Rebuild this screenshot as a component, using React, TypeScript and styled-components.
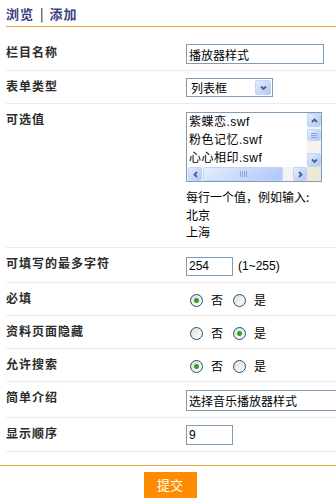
import styled, { createGlobalStyle } from 'styled-components';

const GlobalStyle = createGlobalStyle`
  html, body {
    margin: 0;
    padding: 0;
    background: #fff;
    overflow: hidden;
  }
  body {
    width: 336px;
    font-family: "Liberation Sans", "Noto Sans CJK SC", sans-serif;
    font-size: 12px;
    color: #000;
  }
`;

const listItems = ['紫蝶恋.swf', '粉色记忆.swf', '心心相印.swf'];

const Arrow = ({ dir }: { dir: 'up' | 'down' | 'left' | 'right' }) => {
  const points = {
    up: '2,6 4.5,3.5 7,6',
    down: '2,3.5 4.5,6 7,3.5',
    left: '6,2 3.5,4.5 6,7',
    right: '3,2 5.5,4.5 3,7',
  }[dir];
  return (
    <svg width="9" height="9" viewBox="0 0 9 9">
      <polyline points={points} fill="none" stroke="#4d6185" strokeWidth="1.8" />
    </svg>
  );
};

const Radio = ({ checked }: { checked?: boolean }) => (
  <RadioInput type="radio" defaultChecked={checked} readOnly />
);

const RadioGroup = ({ yes }: { yes?: boolean }) => (
  <Choices>
    <Choice>
      <Radio checked={!yes} />
      <span>否</span>
    </Choice>
    <Choice>
      <Radio checked={yes} />
      <span>是</span>
    </Choice>
  </Choices>
);

export default function App() {
  return (
    <>
      <GlobalStyle />
      <Page>
        <Header>
          <HeadLink>浏览</HeadLink>
          <Bar>|</Bar>
          <HeadLink>添加</HeadLink>
        </Header>

        <Form>
          <Row>
            <Label>栏目名称</Label>
            <Value>
              <TextInput $width={138} defaultValue="播放器样式" />
            </Value>
          </Row>

          <Row>
            <Label>表单类型</Label>
            <Value>
              <SelectBox>
                <span>列表框</span>
                <DropButton>
                  <Arrow dir="down" />
                </DropButton>
              </SelectBox>
            </Value>
          </Row>

          <Row>
            <Label>可选值</Label>
            <Value $top={1}>
              <ListBox>
                <ListItems>
                  {listItems.map(item => (
                    <ListItem key={item}>{item}</ListItem>
                  ))}
                </ListItems>
                <VScroll>
                  <ScrollButton>
                    <Arrow dir="up" />
                  </ScrollButton>
                  <VThumb>
                    <Grip $vertical />
                  </VThumb>
                  <ScrollButton>
                    <Arrow dir="down" />
                  </ScrollButton>
                </VScroll>
                <HScroll>
                  <ScrollButton>
                    <Arrow dir="left" />
                  </ScrollButton>
                  <HThumb>
                    <Grip />
                  </HThumb>
                  <ScrollButton>
                    <Arrow dir="right" />
                  </ScrollButton>
                </HScroll>
                <Corner />
              </ListBox>
              <Hint>
                <div>每行一个值，例如输入:</div>
                <div>北京</div>
                <div>上海</div>
              </Hint>
            </Value>
          </Row>

          <Row>
            <Label>可填写的最多字符</Label>
            <Value $top={2}>
              <TextInput $width={47} $height={19} defaultValue="254" />
              <Note>(1~255)</Note>
            </Value>
          </Row>

          <Row>
            <Label>必填</Label>
            <Value>
              <RadioGroup />
            </Value>
          </Row>

          <Row>
            <Label>资料页面隐藏</Label>
            <Value>
              <RadioGroup yes />
            </Value>
          </Row>

          <Row>
            <Label>允许搜索</Label>
            <Value>
              <RadioGroup />
            </Value>
          </Row>

          <Row>
            <Label>简单介绍</Label>
            <Value $top={1}>
              <TextInput $width={200} $height={21} defaultValue="选择音乐播放器样式" />
            </Value>
          </Row>

          <Row>
            <Label>显示顺序</Label>
            <Value>
              <TextInput $width={47} defaultValue="9" />
            </Value>
          </Row>
        </Form>

        <Footer>
          <SubmitButton>提交</SubmitButton>
        </Footer>
      </Page>
    </>
  );
}

const Page = styled.div`
  width: 336px;
  height: 502px;
  display: flex;
  flex-direction: column;
`;

const Header = styled.div`
  margin-left: 6px;
  padding: 6px 0 5px;
  border-bottom: 1px solid #e6a83e;
  display: flex;
  align-items: center;
  font-size: 13px;
  line-height: 15px;
  font-weight: bold;
  font-family: "Noto Sans CJK SC", sans-serif;
`;

const HeadLink = styled.span`
  color: #3b4183;
  letter-spacing: 1px;
`;

const Bar = styled.span`
  color: #000;
  font-weight: normal;
  margin: 0 6px 0 6px;
`;

const Form = styled.div`
  margin: 10px 0 0 6px;
  display: flex;
  flex-direction: column;
`;

const Row = styled.div`
  display: grid;
  grid-template-columns: 180px 1fr;
  align-items: start;
  padding: 7px 0 6px;
  border-bottom: 1px solid #ececec;
`;

const Label = styled.div`
  font-family: "Noto Sans CJK SC", sans-serif;
  font-weight: bold;
  font-size: 12px;
  line-height: 15px;
  letter-spacing: 1px;
  color: #2b2b2b;
`;

const Value = styled.div<{ $top?: number }>`
  display: flex;
  flex-direction: column;
  align-items: flex-start;
  padding-top: ${p => p.$top ?? 0}px;
  white-space: nowrap;

  &:has(> input + span) {
    flex-direction: row;
    align-items: center;
  }
`;

const TextInput = styled.input<{ $width: number; $height?: number }>`
  box-sizing: border-box;
  width: ${p => p.$width}px;
  height: ${p => p.$height ?? 20}px;
  margin: 0;
  padding: 0 2px;
  border: 1px solid #7f9db9;
  font-family: "Liberation Sans", "Noto Sans CJK SC", sans-serif;
  font-size: 12px;
  color: #000;
  outline: none;
  background: #fff;
`;

const Note = styled.span`
  margin-left: 5px;
  font-size: 12px;
  line-height: 19px;
`;

const SelectBox = styled.div`
  box-sizing: border-box;
  width: 87px;
  height: 19px;
  border: 1px solid #7f9db9;
  display: flex;
  align-items: center;
  justify-content: space-between;
  padding: 0 1px 0 4px;
  font-family: "Noto Sans CJK SC", sans-serif;
  font-size: 12px;
  line-height: 17px;
`;

const xpButton = `
  box-sizing: border-box;
  display: flex;
  align-items: center;
  justify-content: center;
  border: 1px solid #c3d3fd;
  border-radius: 2px;
  background: linear-gradient(135deg, #e6eefc 0%, #c6d7fb 55%, #b4c8f6 100%);
`;

const DropButton = styled.div`
  ${xpButton}
  width: 16px;
  height: 15px;
`;

const ListBox = styled.div`
  box-sizing: border-box;
  width: 136px;
  height: 70px;
  border: 1px solid #7f9db9;
  display: grid;
  grid-template-columns: 1fr 14px;
  grid-template-rows: 1fr 14px;
  background: #fff;
`;

const ListItems = styled.div`
  padding: 0 0 0 2px;
  overflow: hidden;
`;

const ListItem = styled.div`
  font-family: "Liberation Sans", "Noto Sans CJK SC", sans-serif;
  font-size: 12px;
  line-height: 18px;
  letter-spacing: 0.5px;
`;

const VScroll = styled.div`
  display: flex;
  flex-direction: column;
  justify-content: space-between;
  background: #f4f3ee;
`;

const HScroll = styled.div`
  display: flex;
  align-items: center;
  background: #f4f3ee;
  padding-left: 1px;
  gap: 1px;
`;

const ScrollButton = styled.div`
  ${xpButton}
  width: 14px;
  height: 14px;
  flex: none;
`;

const VThumb = styled.div`
  ${xpButton}
  width: 14px;
  height: 12px;
  margin-top: -10px;
`;

const HThumb = styled.div`
  ${xpButton}
  height: 14px;
  width: 80px;
  margin-right: auto;
`;

const Grip = styled.div<{ $vertical?: boolean }>`
  width: ${p => (p.$vertical ? '6px' : '7px')};
  height: ${p => (p.$vertical ? '5px' : '6px')};
  background: ${p =>
    p.$vertical
      ? 'repeating-linear-gradient(to bottom, #8ca5e2 0 1px, transparent 1px 2px)'
      : 'repeating-linear-gradient(to right, #8ca5e2 0 1px, transparent 1px 2px)'};
`;

const Corner = styled.div`
  background: #ece9d8;
`;

const Hint = styled.div`
  margin-top: 6px;
  font-family: "Noto Sans CJK SC", sans-serif;
  font-size: 12px;
  line-height: 17.5px;
`;

const Choices = styled.div`
  display: flex;
  align-items: center;
  height: 19px;
  font-family: "Noto Sans CJK SC", sans-serif;
  font-size: 12px;
`;

const Choice = styled.label`
  display: flex;
  align-items: center;
  margin-right: 6px;
`;

const RadioInput = styled.input`
  appearance: none;
  box-sizing: border-box;
  width: 13px;
  height: 13px;
  margin: 3px 8px 0 4px;
  border: 1px solid #1c5180;
  border-radius: 50%;
  background: linear-gradient(135deg, #dcdcd6 0%, #f3f3ef 60%, #fff 100%);

  &:checked {
    background:
      radial-gradient(circle, #2ea12a 0 2px, #7fcb62 2.5px, transparent 3px),
      linear-gradient(135deg, #dcdcd6 0%, #f3f3ef 60%, #fff 100%);
  }
`;

const Footer = styled.div`
  margin-top: 13px;
  border-top: 1px solid #e6a83e;
  display: flex;
  justify-content: center;
  padding: 6px 0 0 4px;
`;

const SubmitButton = styled.button`
  width: 53px;
  height: 26px;
  border: none;
  padding: 0;
  background: #ff8c00;
  color: #fff;
  font-family: "Noto Sans CJK SC", sans-serif;
  font-size: 13px;
  cursor: pointer;
`;
